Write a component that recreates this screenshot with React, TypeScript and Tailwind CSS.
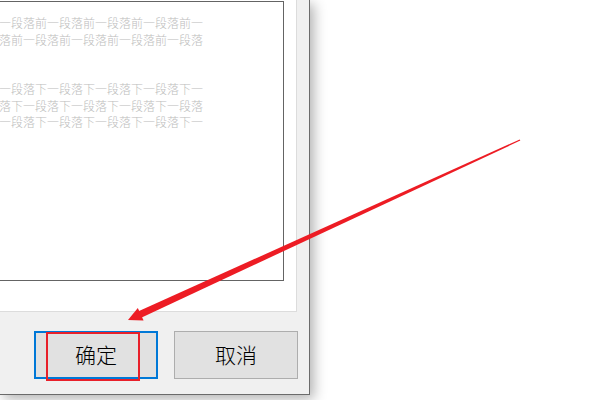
import React from 'react';

const FONT = { fontFamily: '"Noto Sans CJK SC", "Microsoft YaHei", sans-serif' };

const before = ['一段落前一段落前一段落前一段落前一', '落前一段落前一段落前一段落前一段落'];
const after = [
  '一段落下一段落下一段落下一段落下一',
  '落下一段落下一段落下一段落下一段落',
  '一段落下一段落下一段落下一段落下一',
];

function Arrow() {
  // tapered shaft + filled head, tip near the OK button
  return (
    <svg className="absolute inset-0 pointer-events-none" width="600" height="400" viewBox="0 0 600 400">
      <polygon points="520.3,140.6 519.7,139.4 135.7,312.6 138.5,318.9" fill="#ed1c24" />
      <polygon points="128,320 143.6,320.4 137.8,308" fill="#ed1c24" />
    </svg>
  );
}

export default function App() {
  return (
    <div className="relative w-[600px] h-[400px] bg-white overflow-hidden" style={FONT}>
      {/* Dialog */}
      <div className="flex flex-col w-[310px] h-[395px] bg-[#f0f0f0] border-r border-b border-[#6b6b6b] shadow-[4px_4px_12px_rgba(0,0,0,0.3)]">
        {/* Preview panel */}
        <div className="w-[297px] h-[312px] bg-white border-r border-b border-[#dcdcdc] pt-px">
          <div className="w-[284px] h-[280px] border-t border-r border-b border-[#646464] overflow-hidden pt-[13px]">
            <div className="-ml-px text-[12px] leading-[16.5px] text-[#bdbdbd] font-light whitespace-nowrap">
              {before.map((t, i) => (
                <div key={i}>{t}</div>
              ))}
              <div className="mt-[33px]">
                {after.map((t, i) => (
                  <div key={i}>{t}</div>
                ))}
              </div>
            </div>
          </div>
        </div>

        {/* Buttons */}
        <div className="flex gap-4 pl-[34px] pt-[19px]">
          <button className="w-[124px] h-[48px] bg-[#e1e1e1] border-2 border-[#0078d7] text-[21px] font-light text-black flex items-center justify-center">
            确定
          </button>
          <button className="w-[124px] h-[48px] bg-[#e1e1e1] border border-[#adadad] text-[21px] font-light text-black flex items-center justify-center">
            取消
          </button>
        </div>
      </div>

      {/* Annotation: red box around OK */}
      <div className="absolute left-[46px] top-[332px] w-[94px] h-[49px] border-2 border-[#e8202a]" />
      <Arrow />
    </div>
  );
}
